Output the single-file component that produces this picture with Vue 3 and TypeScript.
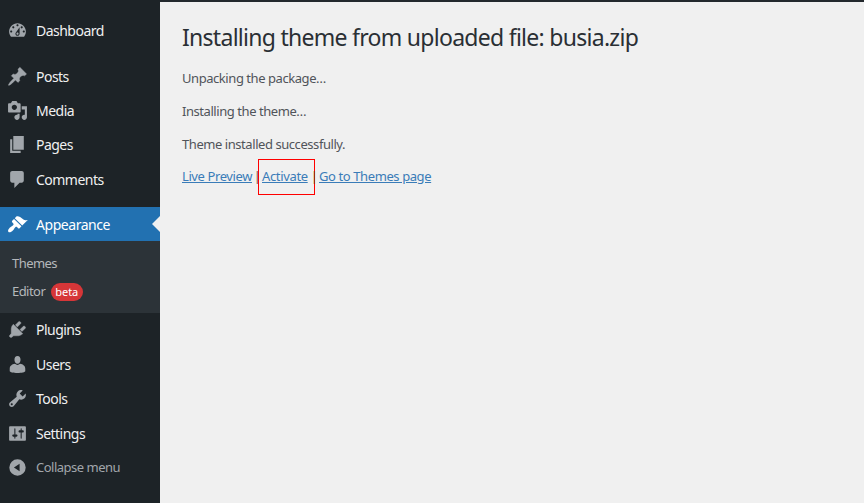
<script setup lang="ts">
interface MenuItem {
  label: string
  icon: string
  kind?: string
}

const topItems: MenuItem[] = [
  { label: 'Dashboard', kind: 'first', icon: 'M3.76 16h12.48c1.1-1.37 1.76-3.11 1.76-5 0-4.42-3.58-8-8-8s-8 3.58-8 8c0 1.89.66 3.63 1.76 5zM10 4c.55 0 1 .45 1 1s-.45 1-1 1-1-.45-1-1 .45-1 1-1zM6 6c.55 0 1 .45 1 1s-.45 1-1 1-1-.45-1-1 .45-1 1-1zm8 0c.55 0 1 .45 1 1s-.45 1-1 1-1-.45-1-1 .45-1 1-1zm-5.37 5.55L12 7v6c0 1.1-.9 2-2 2s-2-.9-2-2c0-.57.24-1.08.63-1.45zM4 10c.55 0 1 .45 1 1s-.45 1-1 1-1-.45-1-1 .45-1 1-1zm12 0c.55 0 1 .45 1 1s-.45 1-1 1-1-.45-1-1 .45-1 1-1zm-5 3c0-.55-.45-1-1-1s-1 .45-1 1 .45 1 1 1 1-.45 1-1z' },
  { label: 'Posts', kind: 'heavy', icon: 'M10.44 3.02l1.82-1.82 6.36 6.35-1.83 1.82c-1.05-.68-2.48-.57-3.41.36l-.75.75c-.92.93-1.04 2.35-.35 3.41l-1.83 1.82-2.41-2.41-2.8 2.79c-.42.42-3.38 2.71-3.8 2.29s1.86-3.39 2.28-3.81l2.79-2.79L4.1 9.36l1.83-1.82c1.05.69 2.48.57 3.4-.36l.75-.75c.93-.92 1.05-2.35.36-3.41z' },
  { label: 'Media', icon: 'M13 11V4c0-.55-.45-1-1-1h-1.67L9 1H5L3.67 3H2c-.55 0-1 .45-1 1v7c0 .55.45 1 1 1h10c.55 0 1-.45 1-1zM7 4.5c1.38 0 2.5 1.12 2.5 2.5S8.38 9.5 7 9.5 4.5 8.38 4.5 7 5.62 4.5 7 4.5zM14 6h5v10.5c0 1.38-1.12 2.5-2.5 2.5S14 17.88 14 16.5s1.12-2.5 2.5-2.5c.17 0 .34.02.5.05V9h-3V6zm-4 8.05V13h2v3.5c0 1.38-1.12 2.5-2.5 2.5S7 17.88 7 16.5 8.12 14 9.5 14c.17 0 .34.02.5.05z' },
  { label: 'Pages', icon: 'M6 15V2h10v13H6zm-1 1h8v2H3V5h2v11z' },
  { label: 'Comments', icon: 'M5 2h9c1.1 0 2 .9 2 2v7c0 1.1-.9 2-2 2h-2l-5 5v-5H5c-1.1 0-2-.9-2-2V4c0-1.1.9-2 2-2z' },
]

const appearanceIcon = 'M14.48 11.06L7.41 3.99l1.5-1.5c.5-.56 2.3-.47 3.51.32 1.21.8 1.43 1.28 2.91 2.1 1.18.64 2.45 1.26 4.45.85zm-.71.71L6.7 4.7 4.93 6.47c-.39.39-.39 1.02 0 1.41l1.06 1.06c.39.39.39 1.03 0 1.42-.6.6-1.43 1.11-2.21 1.69-.35.26-.7.53-1.01.84C1.43 14.23.4 16.08 1.4 17.07c.99 1 2.84-.03 4.18-1.36.31-.31.58-.66.85-1.02.57-.78 1.08-1.61 1.69-2.21.39-.39 1.02-.39 1.41 0l1.06 1.06c.39.39 1.02.39 1.41 0z'

const bottomItems: MenuItem[] = [
  { label: 'Plugins', kind: 'heavy', icon: 'M13.11 4.36L9.87 7.6 8 5.73l3.24-3.24c.35-.34 1.05-.2 1.56.32.52.51.66 1.21.31 1.55zm-8 1.77l.91-1.12 9.01 9.01-1.19.84c-.71.71-2.63 1.16-3.82 1.16H6.14L4.9 17.26c-.59.59-1.54.59-2.12 0-.59-.58-.59-1.53 0-2.12l1.24-1.24v-3.88c0-1.13.4-3.19 1.09-3.89zm7.26 3.97l3.24-3.24c.34-.35 1.04-.21 1.55.31.52.51.66 1.21.31 1.55l-3.24 3.25z' },
  { label: 'Users', icon: 'M10 2c-1.9 0-2.9 1.5-2.9 3.4S8.2 9.2 10 9.2s2.9-1.9 2.9-3.8S11.900 2 10 2zM7.600 9.400c.7.7 1.500 1 2.400 1s1.700-.3 2.400-1c2.900.3 5 2.300 5 4.600v2.300c0 1.200-3.600 1.900-7.400 1.900s-7.400-.7-7.400-1.900V14c0-2.300 2.100-4.300 5-4.600z' },
  { label: 'Tools', icon: 'M16.68 9.77c-1.34 1.34-3.3 1.67-4.95.99l-5.41 6.52c-.99.99-2.59.99-3.58 0s-.99-2.59 0-3.57l6.52-5.42c-.68-1.65-.35-3.61.99-4.95 1.28-1.28 3.12-1.62 4.72-1.06l-2.89 2.89 2.82 2.82 2.86-2.87c.53 1.58.18 3.39-1.08 4.65zM3.81 16.21c.4.39 1.04.39 1.43 0 .4-.4.4-1.04 0-1.43-.39-.4-1.03-.4-1.43 0-.39.39-.39 1.03 0 1.43z' },
  { label: 'Settings', icon: 'M18 16V4c0-.55-.45-1-1-1H3c-.55 0-1 .45-1 1v12c0 .55.45 1 1 1h14c.55 0 1-.45 1-1zM8 11h1c.55 0 1 .45 1 1s-.45 1-1 1H8v1.5c0 .28-.22.5-.5.5s-.5-.22-.5-.5V13H6c-.55 0-1-.45-1-1s.45-1 1-1h1V5.5c0-.28.22-.5.5-.5s.5.22.5.5V11zm5-2h-1c-.55 0-1-.45-1-1s.45-1 1-1h1V5.5c0-.28.22-.5.5-.5s.5.22.5.5V7h1c.55 0 1 .45 1 1s-.45 1-1 1h-1v5.5c0 .28-.22.5-.5.5s-.5-.22-.5-.5V9z' },
  { label: 'Collapse menu', kind: 'collapse', icon: 'M10 2.2a7.8 7.8 0 1 0 0 15.6 7.8 7.8 0 0 0 0-15.6zM12 6.4v7.2L6.6 10z' },
]

const messages: string[] = ['Unpacking the package…', 'Installing the theme…', 'Theme installed successfully.']
</script>

<template>
  <div class="admin">
    <nav class="sidebar">
      <a v-for="item in topItems" :key="item.label" class="item" :class="item.kind">
        <svg class="icon" viewBox="0 0 20 20"><path :d="item.icon" fill-rule="evenodd" /></svg>
        <span>{{ item.label }}</span>
      </a>
      <a class="item current">
        <svg class="icon" viewBox="0 0 20 20"><path :d="appearanceIcon" /></svg>
        <span>Appearance</span>
        <i class="arrow"></i>
      </a>
      <div class="submenu">
        <a class="sub">Themes</a>
        <a class="sub">Editor<span class="badge">beta</span></a>
      </div>
      <a v-for="item in bottomItems" :key="item.label" class="item" :class="item.kind">
        <svg class="icon" viewBox="0 0 20 20"><path :d="item.icon" fill-rule="evenodd" /></svg>
        <span>{{ item.label }}</span>
      </a>
    </nav>
    <main class="content">
      <h1>Installing theme from uploaded file: busia.zip</h1>
      <p v-for="message in messages" :key="message">{{ message }}</p>
      <div class="actions">
        <a class="preview">Live Preview</a>
        <span class="bar">|</span>
        <span class="marked"><a class="activate">Activate</a></span>
        <span class="bar second">|</span>
        <a class="goto">Go to Themes page</a>
      </div>
    </main>
  </div>
</template>

<style>
body {
  margin: 0;
  background: #f0f0f0;
}
</style>

<style scoped>
.admin {
  display: flex;
  box-sizing: border-box;
  width: 864px;
  height: 503px;
  overflow: hidden;
  font-family: "Noto Sans", "Open Sans", sans-serif;
  background: #f0f0f0;
}

.sidebar {
  display: flex;
  flex-direction: column;
  box-sizing: border-box;
  width: 160px;
  flex: none;
  padding-top: 13.5px;
  background: #1d2327;
}

.item {
  position: relative;
  display: flex;
  align-items: center;
  flex: none;
  height: 34.4px;
  padding-left: 7px;
  gap: 8px;
  color: #f0f0f1;
  font-size: 14px;
  letter-spacing: -0.52px;
  white-space: nowrap;
}

.first {
  margin-bottom: 11px;
}

.icon {
  width: 21px;
  height: 21px;
  flex: none;
  fill: #a1a6ab;
}

.heavy .icon {
  stroke: #a1a6ab;
  stroke-width: 0.4;
}

.current {
  margin-top: 10.5px;
  background: #2271b1;
  color: #fff;
  letter-spacing: -0.45px;
}

.current .icon {
  fill: #fff;
}

.arrow {
  position: absolute;
  right: 0;
  top: 9px;
  border: 8px solid transparent;
  border-left: 0;
  border-right-color: #f0f0f0;
}

.submenu {
  display: flex;
  flex-direction: column;
  box-sizing: border-box;
  flex: none;
  height: 71.4px;
  padding: 8px 12px 0;
  background: #2c3338;
}

.sub {
  display: flex;
  align-items: center;
  height: 28px;
  color: #b5b8bb;
  font-size: 13px;
  letter-spacing: -0.55px;
}

.badge {
  box-sizing: border-box;
  height: 18px;
  width: 32px;
  margin: 2px 0 0 5.5px;
  border-radius: 9px;
  background: #d63638;
  color: #fff;
  font-size: 11px;
  line-height: 18px;
  text-align: center;
  letter-spacing: -0.1px;
}

.collapse {
  color: #a1a6ab;
  font-size: 13px;
  letter-spacing: -0.5px;
}

.content {
  box-sizing: border-box;
  flex: 1;
  border-top: 2px solid #23282d;
  padding: 20px 0 0 22px;
  color: #50545a;
  font-size: 13px;
  white-space: nowrap;
}

h1 {
  margin: 0 0 16px;
  color: #2a2f34;
  font-size: 23px;
  font-weight: 400;
  line-height: 30px;
  letter-spacing: -0.72px;
}

p {
  margin: 0 0 13px;
  line-height: 20px;
  letter-spacing: -0.44px;
}

.actions {
  display: flex;
  height: 36px;
  align-items: center;
  margin-top: -8px;
  letter-spacing: -0.4px;
}

.actions a {
  color: #3a7cb8;
  text-decoration: underline;
}

.actions .goto,
.actions .preview {
  padding-bottom: 2px;
}

.preview {
  width: 71px;
}

.bar {
  width: 5px;
  padding-bottom: 2px;
  font-size: 12px;
  text-indent: 1px;
  letter-spacing: 0;
  color: #803a28;
}

.marked {
  box-sizing: border-box;
  width: 57px;
  height: 36px;
  padding-left: 3px;
  border: 1px solid #f00;
  line-height: 32px;
  letter-spacing: -0.35px;
}

.second {
  width: 4px;
  text-indent: -4px;
}
</style>
